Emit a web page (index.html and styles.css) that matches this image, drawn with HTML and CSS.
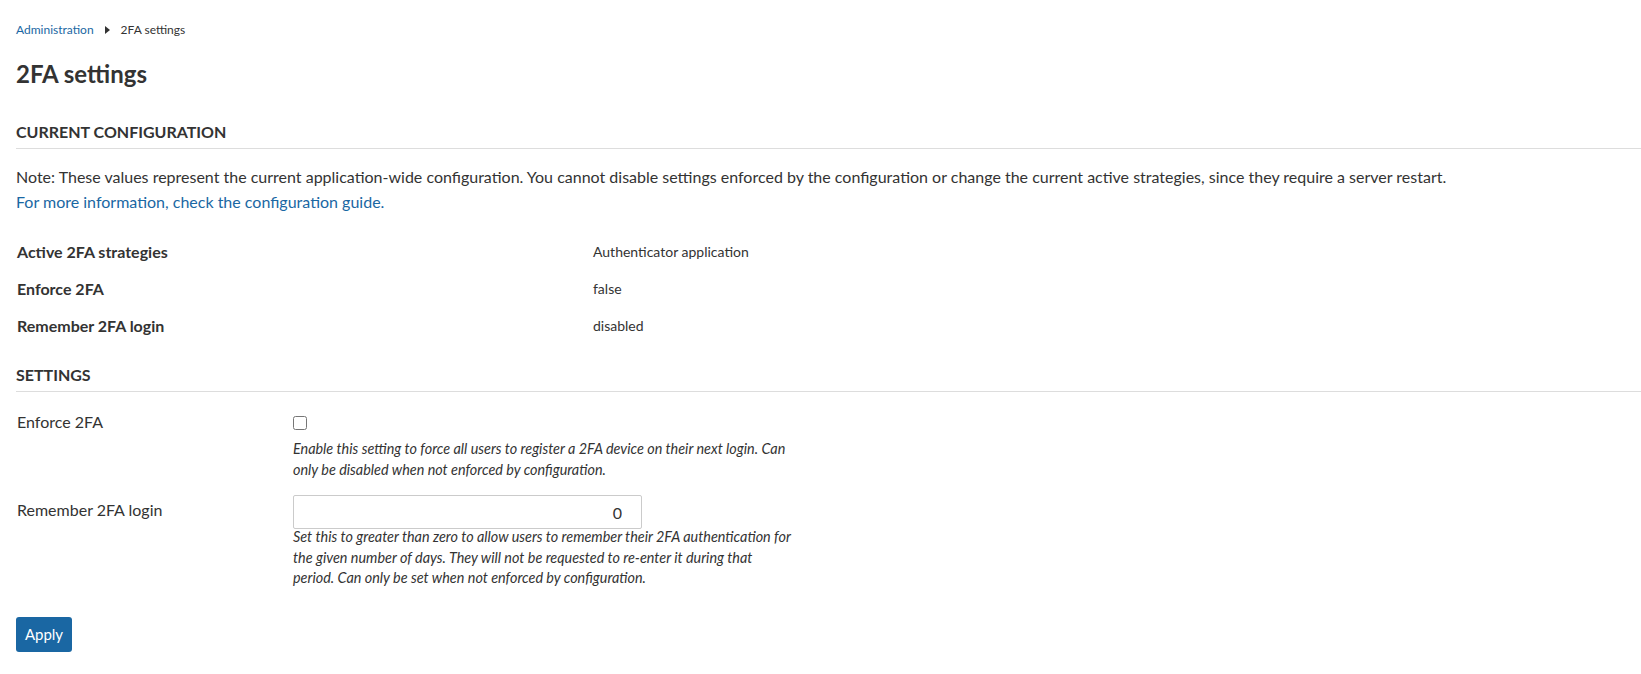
FILE: index.html
```html
<!DOCTYPE html>
<html lang="en">
<head>
<meta charset="utf-8">
<title>2FA settings</title>
<link rel="stylesheet" href="styles.css">
</head>
<body>
<div class="page">
  <nav class="breadcrumb">
    <a href="#" class="crumb-link">Administration</a>
    <span class="crumb-sep"></span>
    <span class="crumb-current">2FA settings</span>
  </nav>
  <h1 class="title">2FA settings</h1>

  <section class="section">
    <h2 class="section-title">Current configuration</h2>
    <p class="note">Note: These values represent the current application-wide configuration. You cannot disable settings enforced by the configuration or change the current active strategies, since they require a server restart.</p>
    <p class="note-link"><a href="#">For more information, check the configuration guide.</a></p>
    <dl class="config">
      <dt>Active 2FA strategies</dt><dd>Authenticator application</dd>
      <dt>Enforce 2FA</dt><dd>false</dd>
      <dt>Remember 2FA login</dt><dd>disabled</dd>
    </dl>
  </section>

  <section class="section section-settings">
    <h2 class="section-title">Settings</h2>
    <form class="settings">
      <div class="field">
        <label class="field-label" for="enforce">Enforce 2FA</label>
        <div class="field-body">
          <input type="checkbox" id="enforce" class="checkbox">
          <p class="help">Enable this setting to force all users to register a 2FA device on their next login. Can only be disabled when not enforced by configuration.</p>
        </div>
      </div>
      <div class="field field-input">
        <label class="field-label field-label-input" for="remember">Remember 2FA login</label>
        <div class="field-body">
          <input type="text" id="remember" class="number" value="0">
          <p class="help help-input">Set this to greater than zero to allow users to remember their 2FA authentication for the given number of days. They will not be requested to re-enter it during that period. Can only be set when not enforced by configuration.</p>
        </div>
      </div>
      <button type="button" class="button">Apply</button>
    </form>
  </section>
</div>
</body>
</html>
```

FILE: styles.css
```css
html, body {
  margin: 0;
  padding: 0;
  background: #fff;
}
body {
  font-family: Lato, "Open Sans", sans-serif;
  color: #333;
  font-size: 16px;
}
.page {
  padding: 22px 0 0 16px;
}
.breadcrumb {
  display: flex;
  align-items: center;
  font-size: 12px;
  line-height: 15px;
  color: #333;
}
.crumb-link {
  color: #1a67a3;
  text-decoration: none;
}
.crumb-sep {
  width: 0;
  height: 0;
  border-top: 4px solid transparent;
  border-bottom: 4px solid transparent;
  border-left: 5px solid #333;
  margin: 0 11px 0 11px;
}
.title {
  font-size: 24px;
  font-weight: bold;
  margin: 22px 0 0 0;
  line-height: 30px;
  color: #333;
}
.section {
  margin-top: 33px;
}
.section-title {
  margin: 0;
  font-size: 16px;
  font-weight: bold;
  text-transform: uppercase;
  line-height: 20px;
  padding-bottom: 6px;
  border-bottom: 1px solid #ddd;
  color: #333;
}
.note {
  margin: 15px 0 0;
  line-height: 25px;
}
.note-link {
  margin: 0;
  line-height: 25px;
}
.note-link a {
  color: #1a67a3;
  text-decoration: none;
}
.config {
  display: grid;
  grid-template-columns: 577px 1fr;
  row-gap: 17px;
  margin: 28px 0 0;
  line-height: 20px;
}
.config dt {
  font-weight: bold;
  font-size: 16px;
  margin: 0;
  padding-left: 1px;
}
.config dd {
  margin: 0;
  font-size: 14px;
}
.section-settings {
  margin-top: 29px;
}
.settings {
  margin-top: 17px;
}
.field {
  display: flex;
  margin-bottom: 15px;
}
.field-label {
  width: 276px;
  flex: none;
  font-size: 16px;
  line-height: 20px;
  padding-top: 3px;
  padding-left: 1px;
}
.field-label-input {
  padding-top: 5px;
}
.field-body {
  display: flex;
  flex-direction: column;
}
.checkbox {
  width: 14px;
  height: 14px;
  margin: 7px 0 0 0;
}
.help {
  margin: 8px 0 0;
  width: 500px;
  font-style: italic;
  font-size: 14.4px;
  line-height: 21px;
}
.help-input {
  margin-top: -2px;
  line-height: 20.5px;
}
.number {
  width: 349px;
  height: 34px;
  box-sizing: border-box;
  border: 1px solid #cbcbcb;
  border-radius: 2px;
  text-align: right;
  padding: 0 19px 0 8px;
  font-family: Lato, sans-serif;
  font-size: 16px;
  color: #333;
  position: relative;
  z-index: 1;
  background: transparent;
}
.button {
  margin-top: 13px;
  background: #1a67a3;
  color: #fff;
  border: none;
  border-radius: 3px;
  font-family: Lato, sans-serif;
  font-size: 15px;
  width: 56px;
  height: 35px;
  padding: 0;
  cursor: pointer;
}
```
